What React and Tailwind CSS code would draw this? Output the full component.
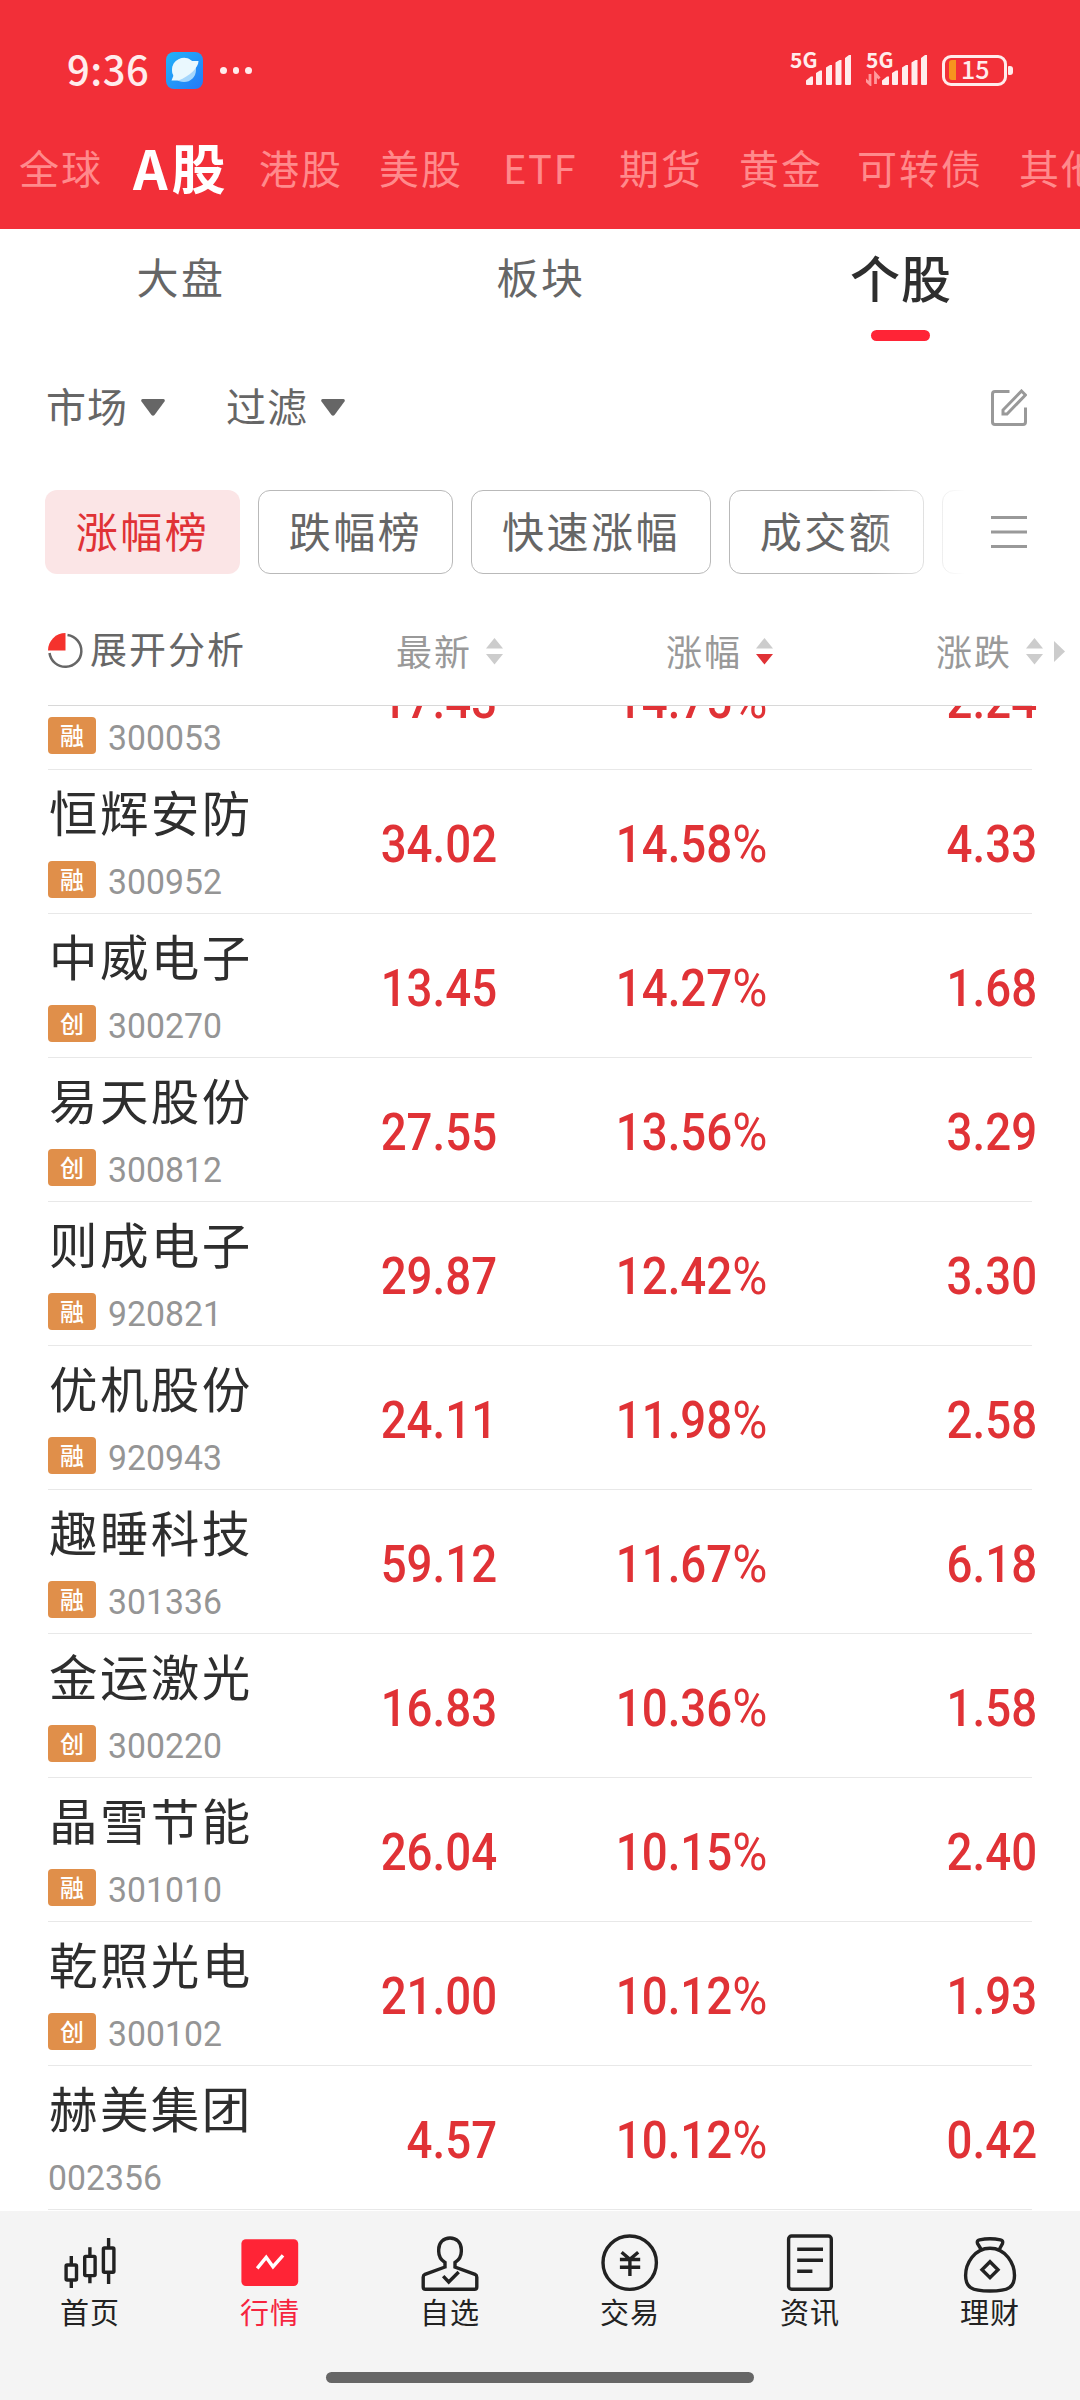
const MARKETS = [
  { label: "全球", className: "w-[120px] pl-[19px]" },
  { label: "A股", className: "w-[124px] pl-[13px]", active: true },
  { label: "港股", className: "w-[120px] pl-[15px]" },
  { label: "美股", className: "w-[120px] pl-[15px]" },
  { label: "ETF", className: "w-[120px] pl-[19px] tracking-[1.5px]" },
  { label: "期货", className: "w-[120px] pl-[15px]" },
  { label: "黄金", className: "w-[119px] pl-[15px]" },
  { label: "可转债", className: "w-[162px] pl-[14px]" },
  { label: "其他", className: "w-[120px] pl-[14px]" },
];

const RANKINGS = [
  { label: "涨幅榜", className: "w-[195px] bg-[#fbe5e6] text-[#e03236]" },
  { label: "跌幅榜", className: "w-[195px] border border-[#b9b9b9] text-[#666]" },
  { label: "快速涨幅", className: "w-[240px] border border-[#b9b9b9] text-[#666]" },
  { label: "成交额", className: "w-[195px] border border-[#b9b9b9] text-[#666]" },
  { label: "", className: "w-[195px] border border-[#b9b9b9] text-[#666]" },
];

const STOCKS = [
  { name: "", tag: "融", code: "300053", price: "17.43", pct: "14.75", change: "2.24" },
  { name: "恒辉安防", tag: "融", code: "300952", price: "34.02", pct: "14.58", change: "4.33" },
  { name: "中威电子", tag: "创", code: "300270", price: "13.45", pct: "14.27", change: "1.68" },
  { name: "易天股份", tag: "创", code: "300812", price: "27.55", pct: "13.56", change: "3.29" },
  { name: "则成电子", tag: "融", code: "920821", price: "29.87", pct: "12.42", change: "3.30" },
  { name: "优机股份", tag: "融", code: "920943", price: "24.11", pct: "11.98", change: "2.58" },
  { name: "趣睡科技", tag: "融", code: "301336", price: "59.12", pct: "11.67", change: "6.18" },
  { name: "金运激光", tag: "创", code: "300220", price: "16.83", pct: "10.36", change: "1.58" },
  { name: "晶雪节能", tag: "融", code: "301010", price: "26.04", pct: "10.15", change: "2.40" },
  { name: "乾照光电", tag: "创", code: "300102", price: "21.00", pct: "10.12", change: "1.93" },
  { name: "赫美集团", code: "002356", price: "4.57", pct: "10.12", change: "0.42" },
];

const NAV_ITEMS = [
  {
    label: "首页",
    icon: (
      <>
        <rect x="6.1" y="35" width="10.4" height="15" rx="1" />
        <path d="M11.3 26v9M11.3 50v8" />
        <rect x="24.7" y="26.4" width="10.4" height="19.2" rx="1" />
        <path d="M29.9 17.3v9M29.9 45.6v7.6" />
        <rect x="43.4" y="18" width="10.5" height="24.3" rx="1" />
        <path d="M48.6 8v10M48.6 42.3V54" />
      </>
    ),
  },
  {
    label: "行情",
    active: true,
    icon: (
      <>
        <rect x="1.4" y="9.3" width="56.8" height="46.7" rx="4.5" fill="#ff2436" stroke="none" />
        <path d="M17.2 38.3l9-11 6.8 9.4 10-11.4" stroke="#fff" />
      </>
    ),
  },
  {
    label: "自选",
    icon: (
      <>
        <path d="M25 37L5 44.3q-1.8.9-1.8 3V57q0 2.3 2.3 2.3h49q2.3 0 2.3-2.3v-9.7q0-2.1-1.8-3L35 37v-4.5c4-2.5 6.3-6.5 6.3-11v-2C41.3 12.5 36.5 8 30 8s-11.3 4.5-11.3 11.5v2c0 4.5 2.3 8.5 6.3 11z" />
        <path d="M23.2 46.2l5.5 5.8 10-10" />
      </>
    ),
  },
  {
    label: "交易",
    icon: (
      <>
        <circle cx="29.7" cy="32.7" r="26.7" />
        <path d="M21.6 22.3l8.3 7 8.3-7M19.9 29.5h20.3M19.9 37.2h20.3M29.9 29v17" />
      </>
    ),
  },
  {
    label: "资讯",
    icon: (
      <>
        <rect x="8.6" y="6" width="42.7" height="53.3" rx="3" />
        <path d="M17.2 19.3H43M17.2 30.3H43M17.2 41.3h15.2" />
      </>
    ),
  },
  {
    label: "理财",
    icon: (
      <>
        <path d="M30 18.3C14 18.3 5.6 34 5.6 45.5 5.6 57 11 61 30 61s24.5-4 24.5-15.5C54.5 34 46 18.3 30 18.3z" />
        <path d="M21.5 20l-4-6.500q-1-3 2-3.700 10.500-2 21 0 3 .7 2 3.700l-3.500 6.500" />
        <path d="M30 31.700l8 8-8 8-8-8z" />
      </>
    ),
  },
];

function Signal({ data }) {
  return (
    <div className="relative h-[36px] w-[62px]">
      <span className="absolute top-[1px] left-0 text-[21px] leading-[17px] font-bold">5G</span>
      <svg className="absolute inset-0" width="62" height="36" viewBox="0 0 62 36" fill="currentColor">
        <path d="M16 34v-3.500l5-4h2V34q0 1-1 1h-5q-1 0-1-1zM26 34V23l4-2.500h2V34q0 1-1 1h-4q-1 0-1-1zM36 34V17.500l4-2.500h2v19q0 1-1 1h-4q-1 0-1-1zM45.500 34V12.500l4-2.500h2v24q0 1-1 1h-4q-1 0-1-1zM55 34V8l4-3h2v29q0 1-1 1h-4q-1 0-1-1z" />
        {data && <path d="M-1 29.500L4 34V24M9.500 34V24l4 4.500" fill="none" stroke="#ff9a9d" strokeWidth="2.800" />}
      </svg>
    </div>
  );
}

function StatusBar() {
  return (
    <div className="flex h-[100px] items-start pt-[50px] text-[#ffecec]">
      <span className="-mt-[2px] ml-[67px] w-[99px] text-[40px] leading-[40px] font-medium tracking-[.5px]">9:36</span>
      <svg className="mt-[2px]" width="37" height="37" viewBox="0 0 37 37">
        <defs>
          <linearGradient id="appBg" x1="0" y1="0" x2="1" y2="1">
            <stop offset="0" stopColor="#22b4f8" />
            <stop offset="1" stopColor="#2478f8" />
          </linearGradient>
        </defs>
        <rect width="37" height="37" rx="8" fill="url(#appBg)" />
        <circle cx="18" cy="18" r="12" fill="#a5d6fc" />
        <path d="M6 18a12 12 0 0 1 20-9h6.500c0 7-9 15-20 19.500h-7l2-5A12 12 0 0 1 6 18z" fill="#eaf8fe" />
      </svg>
      <div className="mt-[17px] ml-[17px] flex gap-[6px]">
        <i className="size-[6.5px] rounded-full bg-current" />
        <i className="size-[6.5px] rounded-full bg-current" />
        <i className="size-[6.5px] rounded-full bg-current" />
      </div>
      <div className="mr-[67px] ml-auto flex">
        <Signal />
        <div className="ml-[14px]">
          <Signal data />
        </div>
        <div className="mt-[4px] ml-[14px] flex items-center">
          <div className="flex h-[31px] w-[65px] items-center rounded-[9px] border-3 border-current pl-[4px]">
            <i className="h-[20px] w-[7px] rounded-l-[3px] bg-[#f7941e]" />
            <span className="-mt-[3px] ml-[5px] text-[25px] leading-[25px] font-medium">15</span>
          </div>
          <i className="ml-[1px] h-[9px] w-[5px] rounded-r-[3px] rounded-l-[1px] bg-current" />
        </div>
      </div>
    </div>
  );
}

function SortArrows({ desc }) {
  return (
    <svg width="17" height="27" viewBox="0 0 17 27">
      <path d="M8.500 0L17 10.500H0z" fill="#ccc" />
      <path d="M0 16h17L8.500 26.500z" fill={desc ? "#e03236" : "#ccc"} />
    </svg>
  );
}

function ColumnTitle({ label, desc }) {
  return (
    <div className="flex items-center justify-end gap-[14px]">
      <span className="-mt-[3px] text-[36px] tracking-[2px] text-[#999]">{label}</span>
      <SortArrows desc={desc} />
    </div>
  );
}

function StockRow({ stock }) {
  return (
    <div className="h-[144px] shrink-0">
      <div className="grid h-[143px] grid-cols-[250px_199px_270px_270px]">
        <div className="flex flex-col">
          <div className="mt-[16px] ml-[1px] h-[50px] text-[48.5px] leading-[50px] tracking-[2.4px] whitespace-nowrap text-[#2e2e2e]">
            {stock.name}
          </div>
          <div className="mt-[25px] flex h-[37px] items-center">
            {stock.tag && (
              <span className="mr-[12px] flex h-[37px] w-[48px] items-center justify-center rounded-[4px] bg-[#e08f4a] pb-[2px] text-[24px] leading-[24px] font-medium text-white">
                {stock.tag}
              </span>
            )}
            <span className="mt-[5px] origin-left scale-x-[.965] font-[Roboto] text-[35px] leading-[37px] text-[#959595]">
              {stock.code}
            </span>
          </div>
        </div>
        <Value>{stock.price}</Value>
        <Value>
          {stock.pct}
          <span className="inline-block origin-left scale-x-105 pr-[2px] font-normal">%</span>
        </Value>
        <Value>{stock.change}</Value>
      </div>
      <div className="mr-[48px] h-px bg-[#e8e8e8]" />
    </div>
  );
}

function Value({ children }) {
  return (
    <div className="mt-[49px] text-right">
      <span className="inline-block origin-right scale-x-[.895] font-[Roboto] text-[51px] leading-[52px] font-medium text-[#e03236]">
        {children}
      </span>
    </div>
  );
}

export default function App() {
  return (
    <div className="flex h-[2400px] w-[1080px] flex-col overflow-hidden bg-white font-['Noto_Sans_CJK_SC',sans-serif]">
      {/* HEADER */}
      <header className="h-[229px] shrink-0 bg-[#f22f38]">
        <StatusBar />
        <nav className="flex h-[133px] w-[1200px] items-center text-[40px] tracking-[2px] whitespace-nowrap text-[#ff8a8c]">
          {MARKETS.map((m) => (
            <span
              key={m.label}
              className={`shrink-0 ${m.className} ${m.active ? "text-[54px] font-bold tracking-[4px] text-white" : ""}`}
            >
              {m.label}
            </span>
          ))}
        </nav>
      </header>

      {/* SUB TABS */}
      <div className="grid h-[112px] shrink-0 grid-cols-3 text-center text-[42px] leading-[50px] tracking-[2.5px] text-[#666]">
        <span className="pt-[22px] pl-[2px]">大盘</span>
        <span className="pt-[22px] pl-[2px]">板块</span>
        <div className="flex flex-col items-center pt-[22px]">
          <span className="pl-[2px] text-[50px] font-medium tracking-[1px] text-[#2e2e2e]">个股</span>
          <i className="mt-[29px] h-[11px] w-[59px] rounded-full bg-[#ff2436]" />
        </div>
      </div>

      {/* FILTERS */}
      <div className="flex h-[149px] shrink-0 items-center pr-[53px] pb-[17px] pl-[46px] text-[40px] tracking-[1px] text-[#666]">
        <span className="-mt-[4px] w-[95px]">市场</span>
        <svg width="24" height="17" viewBox="0 0 24 17" fill="#666">
          <path d="M1.500 0h21q2 .5 1 2.500L13.500 16q-1.500 1.500-3 0L.5 2.500Q-.5.500 1.500 0z" />
        </svg>
        <span className="-mt-[4px] ml-[61px] w-[95px]">过滤</span>
        <svg width="24" height="17" viewBox="0 0 24 17" fill="#666">
          <path d="M1.500 0h21q2 .5 1 2.500L13.500 16q-1.500 1.500-3 0L.5 2.500Q-.5.500 1.500 0z" />
        </svg>
        <svg className="ml-auto" width="36" height="37" viewBox="0 0 36 37" fill="none" stroke="#999" strokeWidth="3">
          <path d="M18.500 2.400H4q-2.500 0-2.500 2.500V33q0 2.500 2.500 2.500h28q2.500 0 2.500-2.500V18.500" />
          <path d="M30.500 2l4 4-18.500 19h-4v-4z" />
        </svg>
      </div>

      {/* RANKINGS */}
      <div className="relative flex h-[84px] shrink-0 items-center gap-[18px] pl-[45px]">
        {RANKINGS.map((r, i) => (
          <span
            key={i}
            className={`flex h-[84px] shrink-0 items-center justify-center rounded-[12px] pb-[5px] text-[42px] tracking-[2.5px] ${r.className}`}
          >
            {r.label}
          </span>
        ))}
        <div className="absolute top-0 right-0 flex h-full w-[210px] items-center justify-end bg-linear-to-r from-transparent to-white to-[45%] pr-[53px]">
          <svg width="36" height="34" viewBox="0 0 36 34" stroke="#999" strokeWidth="3">
            <path d="M0 2.500h36M0 17h36M0 31.500h36" />
          </svg>
        </div>
      </div>

      {/* TABLE HEAD */}
      <div className="grid h-[131px] shrink-0 grid-cols-[240px_215px_270px_270px_37px] items-center pt-[23px] pl-[48px]">
        <div className="flex items-center whitespace-nowrap">
          <svg width="35" height="36" viewBox="0 0 35 36">
            <path d="M19.500 2A16 16 0 1 1 1.500 20" fill="none" stroke="#666" strokeWidth="2.500" />
            <path d="M17.500 0v17.500H0A17.500 17.500 0 0 1 17.500 0z" fill="#f5322d" />
          </svg>
          <span className="-mt-[4px] ml-[7px] text-[37px] tracking-[2px] text-[#666]">展开分析</span>
        </div>
        <ColumnTitle label="最新" />
        <ColumnTitle label="涨幅" desc />
        <ColumnTitle label="涨跌" />
        <svg className="ml-[11px]" width="11" height="21" viewBox="0 0 11 21">
          <path d="M0 0l11 10.500L0 21z" fill="#ccc" />
        </svg>
      </div>
      <div className="mr-[48px] ml-[48px] h-px shrink-0 bg-[#d8d8d8]" />

      {/* LIST */}
      <main className="flex h-[1505px] shrink-0 flex-col overflow-hidden pl-[48px]">
        <div className="-mt-[80px] flex flex-col">
          {STOCKS.map((s) => (
            <StockRow key={s.code} stock={s} />
          ))}
        </div>
      </main>

      {/* BOTTOM NAV */}
      <footer className="flex h-[189px] shrink-0 flex-col items-center bg-[#f4f4f4]">
        <div className="grid h-[161px] w-full grid-cols-6 pt-[19px]">
          {NAV_ITEMS.map((item) => (
            <div key={item.label} className="flex flex-col items-center">
              <svg width="60" height="64" viewBox="0 0 60 64" fill="none" stroke="#222" strokeWidth="3.4">
                {item.icon}
              </svg>
              <span className={`mt-[2px] text-[29px] leading-[30px] tracking-[1px] ${item.active ? "text-[#f6253f]" : "text-[#222]"}`}>
                {item.label}
              </span>
            </div>
          ))}
        </div>
        <div className="h-[11px] w-[428px] rounded-full bg-[#666]" />
      </footer>
    </div>
  );
}
